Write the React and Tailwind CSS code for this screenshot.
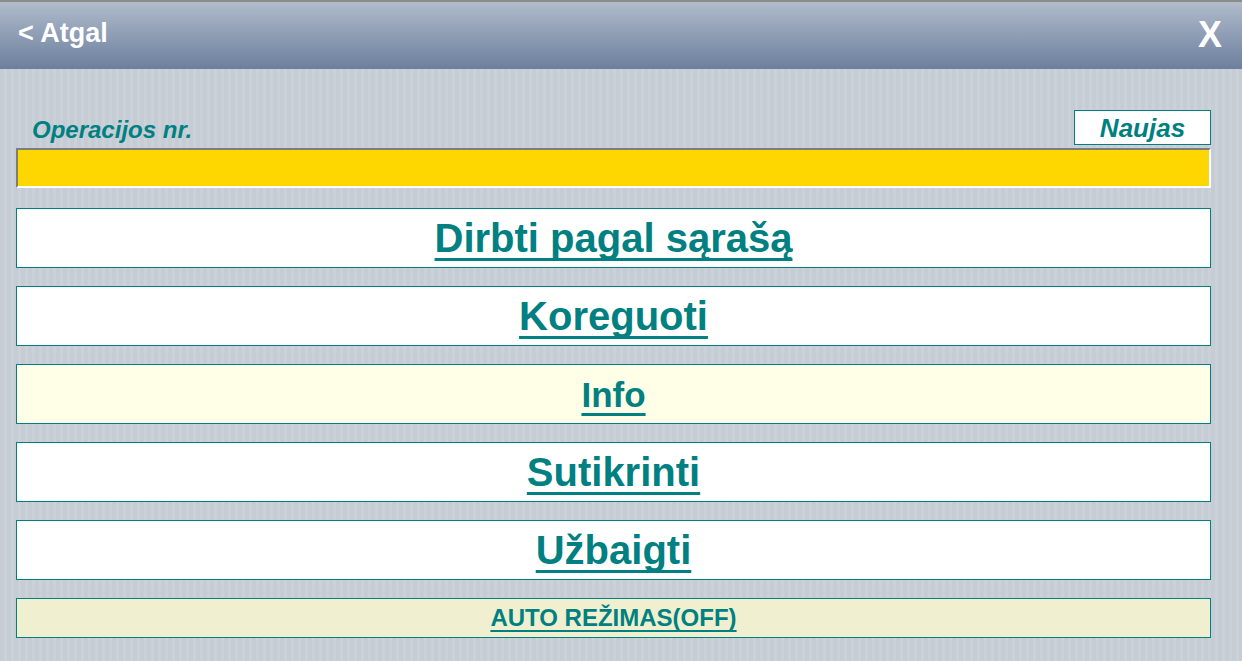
import React from "react";

const font = { fontFamily: '"Liberation Sans", Arial, sans-serif' };

const MenuButton = ({ label, bg = "bg-white", size = "text-[40px]" }) => (
  <button
    className={`w-full h-[60px] ${bg} border border-[#008080] flex items-center justify-center ${size} font-bold text-[#008080] underline decoration-[3px] underline-offset-[6px] [text-decoration-skip-ink:none] leading-none`}
  >
    {label}
  </button>
);

const App = () => {
  return (
    <div className="w-[1242px] h-[661px] overflow-hidden flex flex-col" style={font}>
      <div className="h-[69px] shrink-0 border-t-2 border-[#8c8c8c] bg-gradient-to-b from-[#b1bccc] to-[#6c7f9d] flex items-center justify-between pl-[18px] pr-[20px]">
        <span className="text-white text-[27px] font-bold leading-none pb-[4px]">&lt; Atgal</span>
        <span className="text-white text-[36px] font-bold leading-none pb-[2px]">X</span>
      </div>

      <div className="flex-1 pl-4 pr-[31px] pt-[41px] bg-[image:repeating-linear-gradient(90deg,#c5ccd4_0px,#c5ccd4_4px,#cbd1d9_4px,#cbd1d9_7px)]">
        <div className="flex items-end justify-between">
          <span className="pl-4 pb-[3px] text-[24px] font-bold italic text-[#008080] leading-none">
            Operacijos nr.
          </span>
          <div className="w-[137px] h-[35px] bg-white border border-[#008080] flex items-center justify-center text-[26px] font-bold italic text-[#008080] leading-none">
            Naujas
          </div>
        </div>

        <div className="mt-[3px] h-[40px] bg-[#ffd700] border-t-2 border-l-2 border-[#7d7d7d] border-b-2 border-r-2 border-b-white border-r-white"></div>

        <div className="mt-[20px] flex flex-col gap-[18px]">
          <MenuButton label="Dirbti pagal sąrašą" />
          <MenuButton label="Koreguoti" />
          <MenuButton label="Info" bg="bg-[#ffffe8]" size="text-[35px]" />
          <MenuButton label="Sutikrinti" />
          <MenuButton label="Užbaigti" />
          <button className="w-full h-[40px] bg-[#f0f0d0] border border-[#008080] flex items-center justify-center text-[24px] font-bold text-[#008080] underline decoration-2 underline-offset-[4px] [text-decoration-skip-ink:none] leading-none">
            AUTO REŽIMAS(OFF)
          </button>
        </div>
      </div>
    </div>
  );
};

export default App;
